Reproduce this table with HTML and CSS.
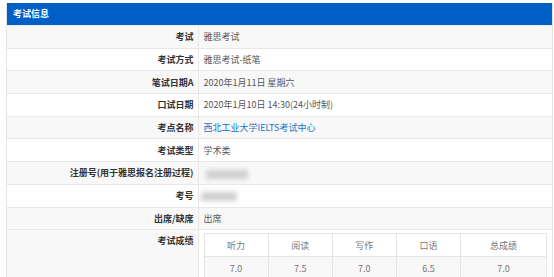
FILE: index.html
```html
<!DOCTYPE html>
<html lang="zh-CN">
<head>
  <meta charset="UTF-8" />
  <title>考试信息</title>
  <link rel="stylesheet" href="styles.css">
</head>
<body>
  <div class="panel">
    <div class="panel-head">考试信息</div>
    <table class="info">
      <tr><th>考试</th><td>雅思考试</td></tr>
      <tr><th>考试方式</th><td>雅思考试-纸笔</td></tr>
      <tr><th>笔试日期A</th><td>2020年1月11日 星期六</td></tr>
      <tr><th>口试日期</th><td>2020年1月10日 14:30(24小时制)</td></tr>
      <tr><th>考点名称</th><td><a href="#">西北工业大学IELTS考试中心</a></td></tr>
      <tr><th>考试类型</th><td>学术类</td></tr>
      <tr><th>注册号(用于雅思报名注册过程)</th><td><span class="masked masked-reg"></span></td></tr>
      <tr><th>考号</th><td><span class="masked masked-id"></span></td></tr>
      <tr><th>出席/缺席</th><td>出席</td></tr>
      <tr class="score-row">
        <th>考试成绩</th>
        <td>
          <table class="scores">
            <tr><td>听力</td><td>阅读</td><td>写作</td><td>口语</td><td class="total">总成绩</td></tr>
            <tr><td>7.0</td><td>7.5</td><td>7.0</td><td>6.5</td><td class="total">7.0</td></tr>
          </table>
        </td>
      </tr>
    </table>
  </div>
</body>
</html>
```

FILE: styles.css
```css
body {
  margin: 0;
  padding: 3px 1px 0 6px;
  background: #fff;
  font-family: "Noto Sans CJK SC", "Noto Sans", sans-serif;
  font-size: 9px;
  color: #555;
}

.panel {
  border-left: 1px solid #e3e3e3;
  border-right: 1px solid #e3e3e3;
}

.panel-head {
  height: 22px;
  line-height: 22px;
  padding-left: 6px;
  background: #0060c8;
  color: #fff;
  font-weight: bold;
}

.info {
  width: 100%;
  border-collapse: collapse;
  table-layout: fixed;
}

.info > tbody > tr > th,
.info > tbody > tr > td {
  height: 22.7px;
  padding: 0 5px;
  border-top: 1px solid #e8e8e8;
  vertical-align: middle;
  box-sizing: border-box;
}

.info > tbody > tr > th {
  width: 191px;
  text-align: right;
  color: #333;
  font-weight: bold;
  border-right: 1px solid #e8e8e8;
  padding-right: 4px;
}

.info > tbody > tr:nth-child(odd) {
  background: #f8f8f8;
}

.info a {
  color: #1a73c8;
  text-decoration: none;
}

/* hidden personal numbers */
.masked {
  display: inline-block;
  vertical-align: middle;
  background: #cfcfcf;
  filter: blur(2.5px);
}

.masked-reg {
  width: 42px;
  height: 9px;
  margin-left: 2px;
}

.masked-id {
  width: 36px;
  height: 9px;
  margin-left: -3px;
}

.score-row > th,
.score-row > td {
  vertical-align: top !important;
  padding-top: 3px !important;
}

.score-row > th {
  padding-top: 4px !important;
  background: #f8f8f8;
}

.scores {
  width: 100%;
  border-collapse: collapse;
  table-layout: fixed;
  border: 1px solid #e3e3e3;
  color: #777;
}

.scores td {
  height: 22px;
  text-align: center;
  border: 1px solid #e6e6e6;
  padding: 0;
}

.scores td.total {
  width: 85px;
}

.scores tr:nth-child(1) {
  background: #fff;
}

.scores tr:nth-child(2) {
  background: #f8f8f8;
}
```
